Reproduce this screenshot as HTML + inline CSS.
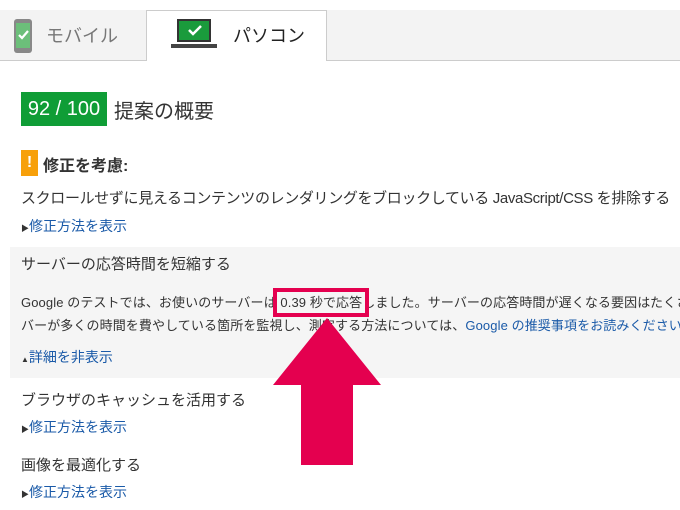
<!DOCTYPE html><html><head><meta charset="utf-8"><style>
body{margin:0;width:680px;height:510px;background:#fff;font-family:"Liberation Sans","Noto Sans CJK JP",sans-serif;color:#333;position:relative;overflow:hidden}
.a{position:absolute;white-space:nowrap}
.lnk{color:#1a5aa8;font-size:14px}
.tri{font-size:8px;color:#333}
</style></head><body>
<div class="a" style="left:0;top:10px;width:680px;height:50px;background:#f3f3f3;border-bottom:1px solid #ccc"></div>
<div class="a" style="left:146px;top:10px;width:181px;height:51px;background:#fff;border:1px solid #ccc;border-bottom:none;box-sizing:border-box"></div>
<svg class="a" style="left:13px;top:18px" width="20" height="36"><rect x="1" y="1" width="18" height="34" rx="3" fill="#888"/><rect x="3" y="5" width="14" height="25" fill="#6cbf7a"/><path d="M6 17l3 3 6-7" stroke="#fff" stroke-width="2.2" fill="none"/></svg>
<div class="a" style="left:46px;top:22px;font-size:18px;color:#777">モバイル</div>
<svg class="a" style="left:170px;top:18px" width="48" height="32"><rect x="7" y="1" width="34" height="23" fill="#333"/><rect x="9" y="3" width="30" height="19" fill="#1a9b3c"/><path d="M19 12l4 4 8-8" stroke="#fff" stroke-width="2.5" fill="none"/><rect x="1" y="26" width="46" height="4" fill="#444"/></svg>
<div class="a" style="left:233px;top:22px;font-size:18px;color:#222">パソコン</div>
<div class="a" style="left:21px;top:92px;width:86px;height:34px;background:#0f9d36;color:#fff;font-size:20px;line-height:34px;text-align:center">92 / 100</div>
<div class="a" style="left:114px;top:95px;font-size:20px;color:#333">提案の概要</div>
<div class="a" style="left:21px;top:150px;width:17px;height:26px;background:#f7a00a;color:#fff;font-weight:bold;text-align:center;line-height:26px;font-size:16px">!</div>
<div class="a" style="left:43px;top:152px;font-size:16px;font-weight:bold;color:#333">修正を考慮:</div>
<div class="a" style="left:21px;top:187px;font-size:15px;letter-spacing:-0.35px">スクロールせずに見えるコンテンツのレンダリングをブロックしている JavaScript/CSS を排除する</div>
<div class="a" style="left:21px;top:216px"><span class="tri">▶</span><span class="lnk">修正方法を表示</span></div>
<div class="a" style="left:10px;top:247px;width:670px;height:131px;background:#f5f5f5"></div>
<div class="a" style="left:21px;top:253px;font-size:15px">サーバーの応答時間を短縮する</div>
<div class="a" style="left:21px;top:292px;font-size:13px;letter-spacing:0.1px">Google のテストでは、お使いのサーバーは <span style="outline:4px solid #e4004f;outline-offset:3px">0.39 秒で応答</span>しました。サーバーの応答時間が遅くなる要因はたくさ</div>
<div class="a" style="left:21px;top:315px;font-size:13px;letter-spacing:0.1px">バーが多くの時間を費やしている箇所を監視し、測定する方法については、<span style="color:#1a5aa8">Google の推奨事項をお読みください</span>。</div>
<div class="a" style="left:21px;top:347px"><span class="tri">▲</span><span class="lnk">詳細を非表示</span></div>
<svg class="a" style="left:272px;top:316px" width="110" height="150"><path d="M55 2L109 69H81V149H29V69H1Z" fill="#e4004f"/></svg>
<div class="a" style="left:21px;top:389px;font-size:15px">ブラウザのキャッシュを活用する</div>
<div class="a" style="left:21px;top:417px"><span class="tri">▶</span><span class="lnk">修正方法を表示</span></div>
<div class="a" style="left:21px;top:454px;font-size:15px">画像を最適化する</div>
<div class="a" style="left:21px;top:482px"><span class="tri">▶</span><span class="lnk">修正方法を表示</span></div>
</body></html>
